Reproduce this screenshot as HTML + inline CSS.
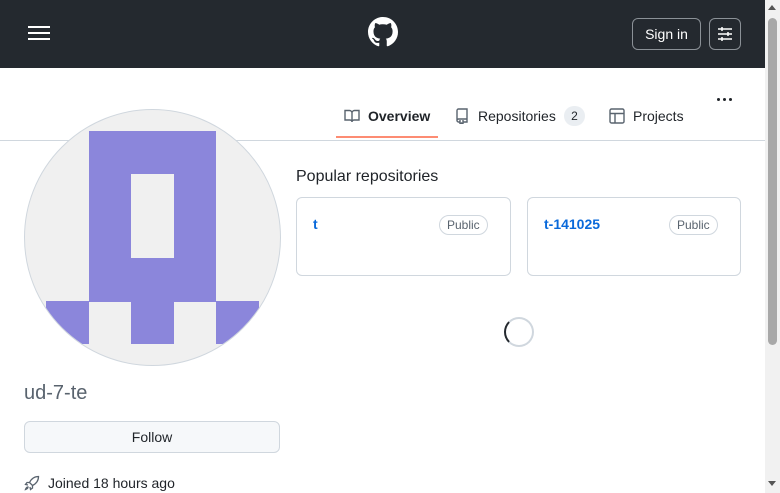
<!DOCTYPE html>
<html><head><style>
*{box-sizing:border-box;margin:0;padding:0}
body{width:780px;height:493px;overflow:hidden;background:#fff;font-family:"Liberation Sans",sans-serif;color:#1f2328;position:relative}
.hdr{position:absolute;left:0;top:0;width:765px;height:68px;background:#24292f}
.abs{position:absolute}
.sb{position:absolute;left:765px;top:0;width:15px;height:493px;background:#f1f1f1}
.thumb{position:absolute;left:768px;top:18px;width:9px;height:327px;background:#a8a8a8;border-radius:5px}
.card{position:absolute;top:197px;height:79px;border:1px solid #d0d7de;border-radius:6px}
.pill{position:absolute;top:17px;font-size:12px;color:#59636e;border:1px solid #d0d7de;border-radius:10px;padding:2px 7px;line-height:14px}
.name{position:absolute;left:16px;top:18px;font-size:14px;font-weight:bold;color:#0969da}
.dot{position:absolute;top:98px;width:3px;height:3px;border-radius:50%;background:#1f2328}
</style></head><body>
<div class="hdr">
 <div class="abs" style="left:28px;top:26px;width:22px;height:2px;background:#fff"></div>
 <div class="abs" style="left:28px;top:32px;width:22px;height:2px;background:#fff"></div>
 <div class="abs" style="left:28px;top:38px;width:22px;height:2px;background:#fff"></div>
 <svg class="abs" style="left:368px;top:17px" width="30" height="30" viewBox="0 0 16 16"><path fill="#fff" d="M8 0C3.58 0 0 3.58 0 8c0 3.540 2.29 6.530 5.47 7.590.4.07.55-.17.55-.38 0-.19-.01-.82-.01-1.49-2.01.37-2.53-.49-2.69-.94-.09-.23-.48-.94-.82-1.13-.28-.15-.68-.52-.01-.53.63-.01 1.08.58 1.23.82.72 1.21 1.87.87 2.33.66.07-.52.28-.87.51-1.07-1.78-.2-3.64-.89-3.64-3.95 0-.87.31-1.59.82-2.15-.08-.2-.36-1.02.08-2.12 0 0 .67-.21 2.2.82.64-.18 1.32-.27 2-.27.68 0 1.36.09 2 .27 1.53-1.04 2.2-.82 2.2-.82.44 1.1.16 1.92.08 2.12.51.56.82 1.27.82 2.15 0 3.07-1.87 3.75-3.65 3.95.29.25.54.73.54 1.48 0 1.07-.01 1.93-.01 2.2 0 .21.15.46.55.38A8.013 8.013 0 0016 8c0-4.42-3.58-8-8-8z"/></svg>
 <div class="abs" style="left:632px;top:18px;width:69px;height:32px;border:1px solid #d0d7de99;border-radius:6px;color:#fff;font-size:14px;text-align:center;line-height:30px">Sign in</div>
 <div class="abs" style="left:709px;top:18px;width:32px;height:32px;border:1px solid #d0d7de99;border-radius:6px"></div>
 <svg class="abs" style="left:717px;top:26px" width="16" height="16" viewBox="0 0 16 16" stroke="#fff" stroke-width="1.5"><path d="M1 3h14M1 8h14M1 13h14"/><path d="M5 1v4M11 6v4M5 11v4" /></svg>
</div>
<div class="dot" style="left:717px"></div><div class="dot" style="left:723px"></div><div class="dot" style="left:729px"></div>
<div class="abs" style="left:0;top:140px;width:765px;height:1px;background:#d0d7de"></div>
<svg class="abs" style="left:344px;top:108px" width="16" height="16" viewBox="0 0 16 16" fill="none" stroke="#59636e" stroke-width="1.4"><path d="M1 2.5h4.5a2.5 2.5 0 012.5 2.5v9a2 2 0 00-2-2H1zM15 2.5h-4.5A2.5 2.5 0 008 5v9a2 2 0 012-2h5z"/></svg>
<div class="abs" style="left:368px;top:108px;font-size:14px;font-weight:bold">Overview</div>
<div class="abs" style="left:336px;top:136px;width:102px;height:2px;background:#fd8c73"></div>
<svg class="abs" style="left:454px;top:108px" width="16" height="16" viewBox="0 0 16 16" fill="none" stroke="#59636e" stroke-width="1.4"><path d="M3 13V2.5A1.5 1.5 0 014.5 1H13v10H4.5A1.5 1.5 0 003 12.5 1.5 1.5 0 004.5 14H6M9 14h4v-3M6 12v4l1.5-1 1.5 1v-4"/></svg>
<div class="abs" style="left:478px;top:108px;font-size:14px">Repositories</div>
<div class="abs" style="left:564px;top:106px;width:21px;height:20px;border-radius:10px;background:#eaeef2;font-size:12px;text-align:center;line-height:20px">2</div>
<svg class="abs" style="left:609px;top:108px" width="16" height="16" viewBox="0 0 16 16" fill="none" stroke="#59636e" stroke-width="1.4"><rect x="1" y="1" width="14" height="14" rx="1.5"/><path d="M1 5.5h14M6 5.5V15"/></svg>
<div class="abs" style="left:633px;top:108px;font-size:14px">Projects</div>

<div class="abs" style="left:24px;top:109px;width:257px;height:257px;border-radius:50%;border:1px solid #d0d7de;background:#f0f0f0;overflow:hidden">
 <svg width="257" height="257" style="position:absolute;left:-1px;top:-1px"><g fill="#8b86db">
 <rect x="65" y="22" width="127" height="171"/>
 <rect x="22" y="192" width="43" height="43"/><rect x="107" y="192" width="43" height="43"/><rect x="192" y="192" width="43" height="43"/>
 </g><rect x="107" y="65" width="43" height="84" fill="#f0f0f0"/></svg>
</div>
<div class="abs" style="left:24px;top:382px;font-size:20px;color:#59636e">ud-7-te</div>
<div class="abs" style="left:24px;top:421px;width:256px;height:32px;border:1px solid #d0d7de;border-radius:6px;background:#f6f8fa;font-size:14px;text-align:center;line-height:30px">Follow</div>
<svg class="abs" style="left:24px;top:475px" width="16" height="16" viewBox="0 0 16 16" fill="none" stroke="#59636e" stroke-width="1.3"><path d="M14.5 1.5c-4 0-7 2-9 6l3 3c4-2 6-5 6-9zM5.5 7.5H3L1.5 9.5l2.5.5M8.5 10.5V13l-2 1.5-.5-2.5M4 12c-1 0-2 1-2.5 2.5 1.5-.5 2.5-1.5 2.5-2.5z"/></svg>
<div class="abs" style="left:48px;top:475px;font-size:14px">Joined 18 hours ago</div>

<div class="abs" style="left:296px;top:168px;font-size:16px">Popular repositories</div>
<div class="card" style="left:296px;width:215px"><div class="name">t</div><div class="pill" style="left:142px">Public</div></div>
<div class="card" style="left:527px;width:214px"><div class="name">t-141025</div><div class="pill" style="left:141px">Public</div></div>
<div class="abs" style="left:504px;top:317px;width:30px;height:30px;border-radius:50%;border:2px solid #d0d7de;border-left-color:#24292f"></div>

<div class="sb"></div><div class="thumb"></div>
<div class="abs" style="left:768px;top:5px;width:0;height:0;border:4px solid transparent;border-bottom:5px solid #555;border-top:0"></div>
<div class="abs" style="left:768px;top:481px;width:0;height:0;border:4px solid transparent;border-top:5px solid #555;border-bottom:0"></div>
</body></html>
